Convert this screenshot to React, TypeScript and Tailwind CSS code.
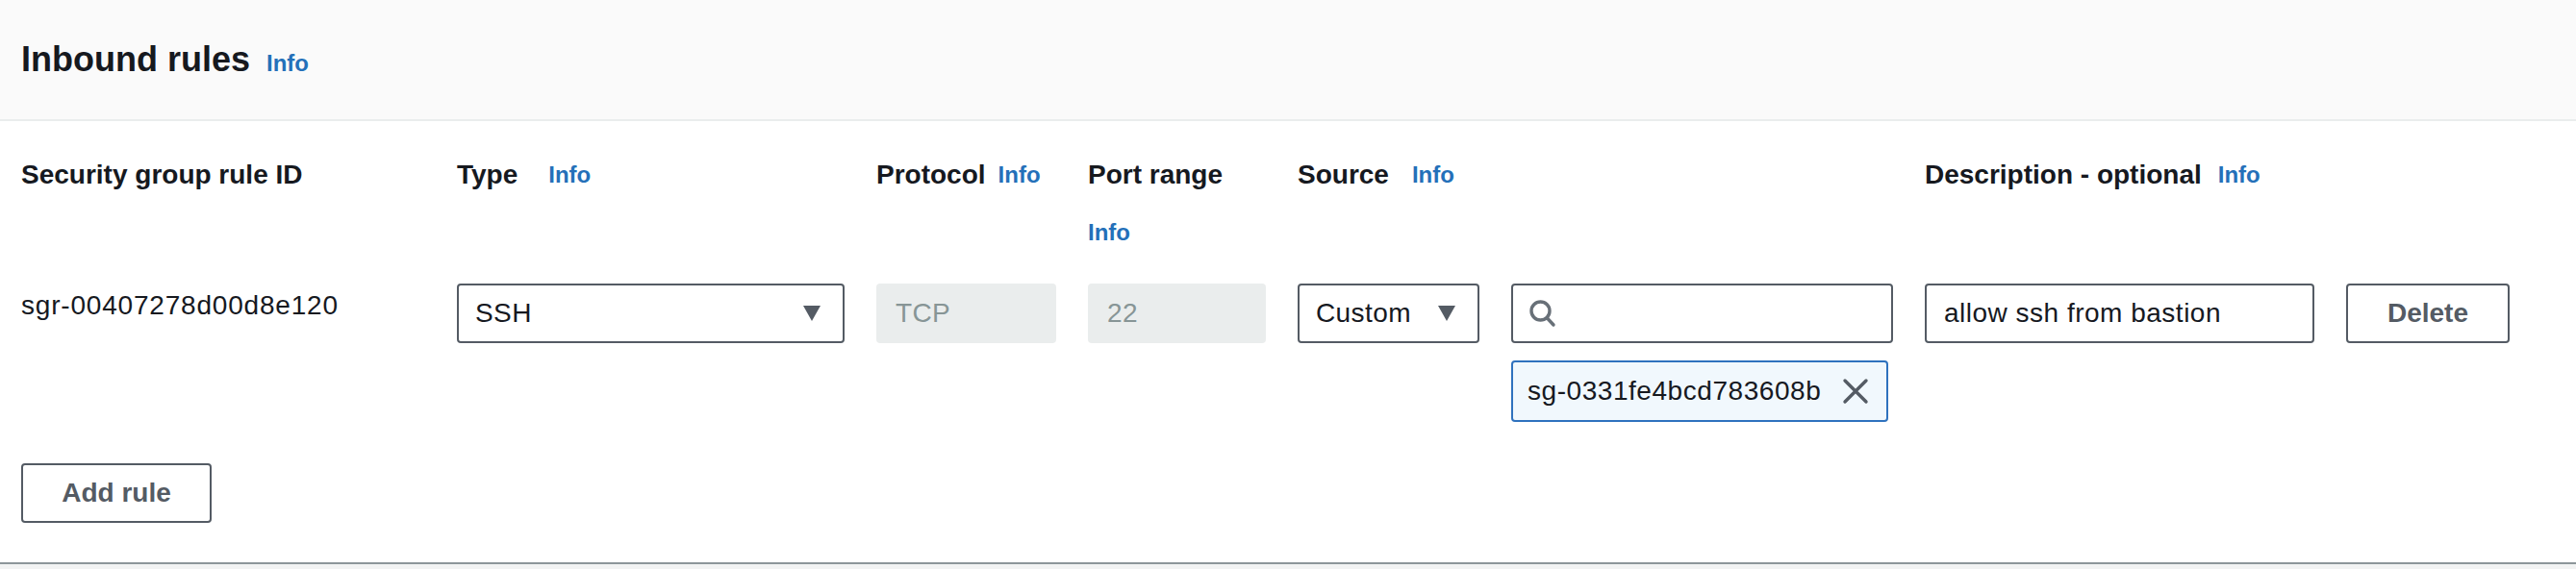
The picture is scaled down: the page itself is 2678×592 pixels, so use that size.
import React from 'react';

const Info: React.FC<{ className?: string }> = ({ className = '' }) => (
  <span className={`text-[24px] font-bold leading-[32px] text-[#2470b9] ${className}`}>Info</span>
);

const Label: React.FC<{ text: string; gap?: string; info?: boolean }> = ({ text, gap = 'gap-x-[16px]', info = true }) => (
  <div className={`flex flex-wrap items-center content-start gap-y-[22px] ${gap}`}>
    <span className="text-[28px] font-bold leading-[44px] text-[#16191f] whitespace-nowrap">{text}</span>
    {info && <Info />}
  </div>
);

const Caret = () => (
  <svg width="20" height="18" viewBox="0 0 20 18">
    <path d="M1 1 H19 L10 17 Z" fill="#545b64" />
  </svg>
);

const Select: React.FC<{ value: string }> = ({ value }) => (
  <div className="h-[62px] flex items-center justify-between pl-[17px] pr-[22px] bg-white border-2 border-[#545b64] rounded-[4px]">
    <span className="text-[28px] tracking-[0.4px] text-[#16191f]">{value}</span>
    <Caret />
  </div>
);

const Disabled: React.FC<{ value: string }> = ({ value }) => (
  <div className="h-[62px] flex items-center px-[20px] bg-[#eaeded] rounded-[4px]">
    <span className="text-[28px] tracking-[0.4px] text-[#879596]">{value}</span>
  </div>
);

export default function App() {
  return (
    <div className="min-h-[592px] bg-[#f2f3f3] font-['Liberation_Sans',Arial,sans-serif]">
      <div className="bg-white border-b-2 border-[#8d969a]">
        <div className="h-[126px] bg-[#fafafa] border-b-2 border-[#eaeded] flex items-center px-[22px]">
          <div className="flex items-baseline">
            <h2 className="text-[36px] font-bold text-[#16191f]">Inbound rules</h2>
            <Info className="ml-[17px]" />
          </div>
        </div>

        <div className="px-[22px] pt-[34px] pb-[41px]">
          <div className="grid grid-cols-[420px_403px_187px_185px_189px_397px_405px_170px] gap-x-[33px] gap-y-[37px]">
            <Label text="Security group rule ID" info={false} />
            <Label text="Type" gap="gap-x-[32px]" />
            <Label text="Protocol" gap="gap-x-[13px]" />
            <Label text="Port range" />
            <Label text="Source" gap="gap-x-[24px]" />
            <div />
            <Label text="Description - optional" gap="gap-x-[17px]" />
            <div />

            <div className="text-[28px] leading-[46px] tracking-[0.8px] text-[#16191f]">sgr-00407278d00d8e120</div>
            <Select value="SSH" />
            <Disabled value="TCP" />
            <Disabled value="22" />
            <Select value="Custom" />
            <div className="flex flex-col gap-[18px]">
              <div className="h-[62px] flex items-center px-[16px] bg-white border-2 border-[#545b64] rounded-[4px]">
                <svg width="30" height="30" viewBox="0 0 30 30" fill="none" stroke="#687078" strokeWidth="3.4" strokeLinecap="round">
                  <circle cx="12.5" cy="12.5" r="9.5" />
                  <path d="M19.5 20 L26 27" />
                </svg>
              </div>
              <div className="h-[64px] w-fit flex items-center gap-[22px] pl-[15px] pr-[18px] bg-[#f1f8fd] border-2 border-[#2f72be] rounded-[4px]">
                <span className="text-[28px] tracking-[0.55px] text-[#16191f]">sg-0331fe4bcd783608b</span>
                <svg width="28" height="28" viewBox="0 0 28 28" stroke="#545b64" strokeWidth="3.4" strokeLinecap="round">
                  <path d="M3 3 L25 25 M25 3 L3 25" />
                </svg>
              </div>
            </div>
            <div className="h-[62px] flex items-center px-[18px] bg-white border-2 border-[#545b64] rounded-[4px]">
              <span className="text-[28px] tracking-[0.5px] text-[#16191f]">allow ssh from bastion</span>
            </div>
            <button className="h-[62px] w-full bg-white border-2 border-[#545b64] rounded-[4px] text-[28px] font-bold text-[#545b64]">
              Delete
            </button>
          </div>

          <button className="mt-[43px] h-[62px] w-[198px] bg-white border-2 border-[#545b64] rounded-[4px] text-[28px] font-bold text-[#545b64]">
            Add rule
          </button>
        </div>
      </div>
    </div>
  );
}
